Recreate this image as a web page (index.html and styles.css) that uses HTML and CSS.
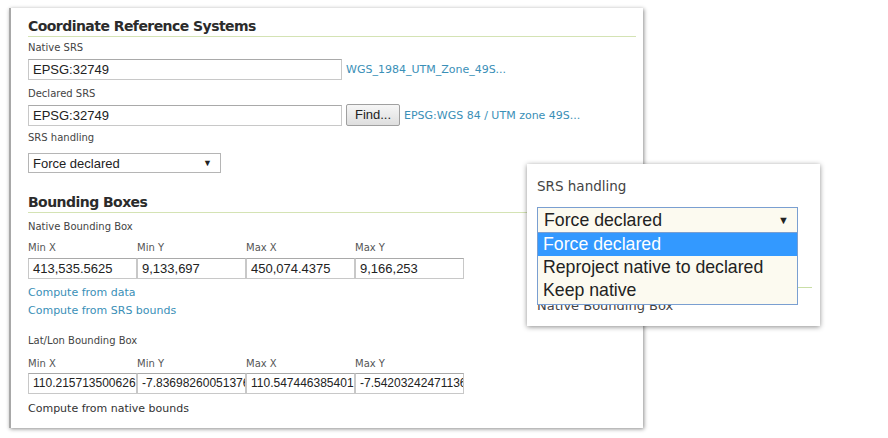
FILE: index.html
```html
<!DOCTYPE html>
<html>
<head>
<meta charset="utf-8">
<link rel="stylesheet" href="styles.css">
</head>
<body>
<div class="panel">
  <h2 class="heading">Coordinate Reference Systems</h2>
  <div class="label l-native">Native SRS</div>
  <div class="row">
    <div class="input wide">EPSG:32749</div>
    <a class="link">WGS_1984_UTM_Zone_49S...</a>
  </div>
  <div class="label l-declared">Declared SRS</div>
  <div class="row">
    <div class="input wide">EPSG:32749</div>
    <div class="button">Find...</div>
    <a class="link">EPSG:WGS 84 / UTM zone 49S...</a>
  </div>
  <div class="label l-handling">SRS handling</div>
  <div class="select"><span>Force declared</span><span class="arrow">▼</span></div>

  <h2 class="heading h2b">Bounding Boxes</h2>
  <div class="label l-nbb">Native Bounding Box</div>
  <div class="grid">
    <div class="clabel">Min X</div><div class="clabel">Min Y</div><div class="clabel">Max X</div><div class="clabel">Max Y</div>
    <div class="input cell">413,535.5625</div><div class="input cell">9,133,697</div><div class="input cell">450,074.4375</div><div class="input cell">9,166,253</div>
  </div>
  <a class="link block first">Compute from data</a>
  <a class="link block">Compute from SRS bounds</a>

  <div class="label l-latlon">Lat/Lon Bounding Box</div>
  <div class="grid g2">
    <div class="clabel">Min X</div><div class="clabel">Min Y</div><div class="clabel">Max X</div><div class="clabel">Max Y</div>
    <div class="input cell small">110.215713500626</div><div class="input cell small">-7.83698260051376</div><div class="input cell small">110.547446385401</div><div class="input cell small">-7.54203242471136</div>
  </div>
  <div class="plain">Compute from native bounds</div>
</div>

<div class="callout">
  <div class="c-label">SRS handling</div>
  <div class="c-select"><span>Force declared</span><span class="c-arrow">▼</span></div>
  <div class="c-list">
    <div class="c-opt sel">Force declared</div>
    <div class="c-opt">Reproject native to declared</div>
    <div class="c-opt">Keep native</div>
  </div>
  <div class="c-under">Native Bounding Box</div>
  <div class="c-line"></div>
</div>
</body>
</html>
```
FILE: styles.css
```css
html, body {
  margin: 0;
  padding: 0;
  background: #fff;
}
body {
  position: relative;
  width: 888px;
  height: 438px;
  overflow: hidden;
  font-family: "DejaVu Sans", Verdana, sans-serif;
  color: #333;
}
.panel {
  margin: 8px 0 0 9px;
  width: 634px;
  height: 420px;
  box-sizing: border-box;
  padding: 0 0 0 17px;
  border-left: 2px solid #a8a8a8;
  box-shadow: 1px 1px 4px rgba(0,0,0,0.45);
  background: #fff;
}
.heading {
  margin: 0 7px 0 0;
  padding: 9px 0 1px 0;
  font-size: 14px;
  font-weight: bold;
  letter-spacing: -0.55px;
  color: #2b2b2b;
  border-bottom: 1px solid #d4e3b4;
  line-height: 18px;
}
.h2b {
  margin-top: 20px;
  padding-top: 0;
}
.label {
  font-size: 10px;
  color: #444;
  line-height: 12px;
  margin-top: 6px;
  margin-bottom: 4px;
}
.l-native { margin-top: 5px; margin-bottom: 5px; }
.l-declared { margin-top: 8px; margin-bottom: 4px; }
.l-handling { margin-top: 6px; margin-bottom: 9px; }
.l-nbb { margin-top: 8px; margin-bottom: 0; }
.l-latlon { margin-top: 15px; margin-bottom: 0; }
.row {
  display: flex;
  align-items: center;
}
.input {
  box-sizing: border-box;
  height: 21px;
  border: 1px solid #c8c8c8;
  border-top-color: #a9a9a9;
  font-family: "Liberation Sans", Arial, sans-serif;
  font-size: 13px;
  color: #222;
  line-height: 19px;
  padding: 0 4px;
  background: #fff;
  white-space: nowrap;
  overflow: hidden;
}
.wide { width: 314px; }
.link {
  font-size: 11px;
  color: #3a8fb7;
  margin-left: 4px;
  text-decoration: none;
}
.button {
  box-sizing: border-box;
  margin-left: 4px;
  height: 22px;
  width: 54px;
  border: 1px solid #a0a0a0;
  border-radius: 2px;
  background: linear-gradient(#f6f6f6, #dedede);
  font-family: "Liberation Sans", Arial, sans-serif;
  font-size: 13px;
  line-height: 20px;
  text-align: center;
  color: #222;
}
.select {
  box-sizing: border-box;
  width: 193px;
  height: 20px;
  border: 1px solid #b5b5b5;
  display: flex;
  justify-content: space-between;
  align-items: center;
  padding: 0 8px 0 4px;
  font-family: "Liberation Sans", Arial, sans-serif;
  font-size: 13px;
  color: #222;
}
.arrow { font-size: 9px; color: #222; }
.grid {
  display: grid;
  grid-template-columns: repeat(4, 109px);
}
.clabel {
  font-size: 10px;
  color: #555;
  line-height: 12px;
  margin-top: 9px;
  margin-bottom: 4px;
}
.g2 .clabel { margin-top: 11px; margin-bottom: 3px; }
.cell { width: 109px; }
.small { font-size: 12px; padding: 0 4px; }
.block { display: block; margin-left: 0; line-height: 18px; }
.first { margin-top: 5px; }
.plain {
  font-size: 11px;
  color: #333;
  line-height: 16px;
  margin-top: 7px;
}
.callout {
  position: absolute;
  left: 527px;
  top: 164px;
  width: 293px;
  height: 162px;
  box-sizing: border-box;
  background: #fff;
  box-shadow: 0 1px 5px rgba(0,0,0,0.45);
  padding: 14px 0 0 10px;
  overflow: hidden;
}
.c-label {
  font-size: 13.5px;
  color: #444;
  line-height: 16px;
}
.c-select {
  margin-top: 13px;
  box-sizing: border-box;
  width: 261px;
  height: 26px;
  border: 1px solid #7a9fd1;
  background: #fcfaf0;
  display: flex;
  justify-content: space-between;
  align-items: center;
  padding: 0 8px 0 6px;
  font-family: "Liberation Sans", Arial, sans-serif;
  font-size: 17.7px;
  color: #222;
}
.c-arrow { font-size: 11px; }
.c-list {
  position: relative;
  z-index: 2;
  box-sizing: border-box;
  width: 261px;
  border: 1px solid #7a9fd1;
  border-top: none;
  background: #fcfaf0;
  font-family: "Liberation Sans", Arial, sans-serif;
  font-size: 17.7px;
  color: #222;
  padding-bottom: 2px;
}
.c-opt {
  padding: 0 5px;
  line-height: 23px;
}
.c-opt.sel {
  background: #3399ff;
  color: #fff;
}
.c-under {
  margin-top: -7px;
  font-size: 13px;
  line-height: 16px;
  color: #444;
}
.c-line {
  position: absolute;
  left: 270px;
  top: 123px;
  width: 15px;
  border-top: 1px solid #c9dea6;
}
```
